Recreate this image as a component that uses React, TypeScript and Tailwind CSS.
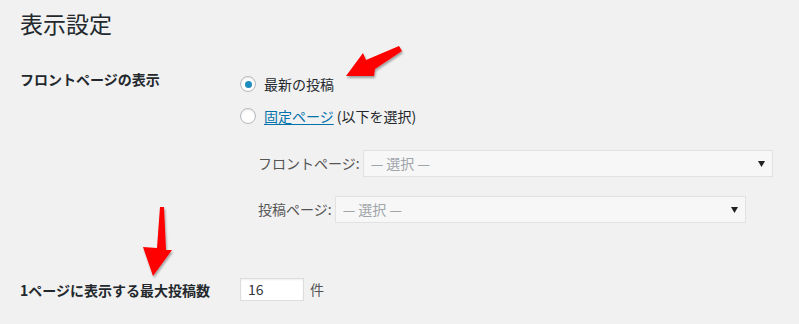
const font = { fontFamily: '"Noto Sans CJK JP", "Noto Sans", sans-serif' };

function Radio({ checked }: { checked?: boolean }) {
  return (
    <span className="flex h-[16px] w-[16px] shrink-0 items-center justify-center rounded-full border border-[#b4b9be] bg-white shadow-[inset_0_1px_2px_rgba(0,0,0,0.1)]">
      {checked && <span className="h-[7px] w-[7px] rounded-full bg-[#1e8cbe]" />}
    </span>
  );
}

function Select({ width }: { width: string }) {
  return (
    <div
      className={`flex h-[27px] ${width} items-center justify-between border border-[#e2e2e2] bg-[#f7f7f7] pl-[7px] pr-[7px] text-[14px] text-[#a0a5aa]`}
    >
      <span>— 選択 —</span>
      <svg width="7" height="6" viewBox="0 0 7 6">
        <path d="M0 0h7L3.5 6z" fill="#222" />
      </svg>
    </div>
  );
}

export default function App() {
  return (
    <div className="relative h-[324px] w-[799px] overflow-hidden bg-[#f1f1f1] text-[#23282d]" style={font}>
      <div className="pl-[20px] pt-[9px]">
        <h1 className="text-[23px] font-normal leading-[29px]">表示設定</h1>

        <div className="mt-[36px] flex">
          <div className="-mt-[5px] w-[220px] text-[14px] font-bold leading-[20px]">フロントページの表示</div>
          <div className="text-[14px]">
            <label className="flex h-[20px] items-center gap-[8px]">
              <Radio checked />
              <span className="leading-[20px]">最新の投稿</span>
            </label>
            <label className="mt-[12px] flex h-[20px] items-center gap-[8px]">
              <Radio />
              <span className="leading-[20px]">
                <a className="text-[#0073aa] underline underline-offset-2">固定ページ</a> (以下を選択)
              </span>
            </label>
            <div className="mt-[24px] flex flex-col gap-[19px] pl-[18px] text-[#555]">
              <div className="flex items-center gap-[3px]">
                <span>フロントページ:</span>
                <Select width="w-[410px]" />
              </div>
              <div className="flex items-center gap-[3px]">
                <span>投稿ページ:</span>
                <Select width="w-[411px]" />
              </div>
            </div>
          </div>
        </div>

        <div className="mt-[55px] flex items-center">
          <div className="w-[220px] text-[14px] font-bold leading-[20px]">1ページに表示する最大投稿数</div>
          <div className="flex h-[23px] w-[64px] items-center border border-[#dddddd] bg-white pl-[7px] text-[14px] text-[#32373c] shadow-[inset_0_1px_2px_rgba(0,0,0,0.07)]">
            16
          </div>
          <span className="ml-[6px] text-[14px] text-[#555]">件</span>
        </div>
      </div>

      <svg className="pointer-events-none absolute left-0 top-0" width="799" height="324">
        <defs>
          <filter id="sh" x="-20%" y="-20%" width="140%" height="140%">
            <feDropShadow dx="1" dy="2" stdDeviation="1.2" floodColor="#000" floodOpacity="0.35" />
          </filter>
        </defs>
        <polygon
          points="346,76 363,53 366,60 399,46 402,51 375,69 374,76"
          fill="#ff0000"
          filter="url(#sh)"
        />
        <polygon
          points="160,207 164,207 166,250 172,250 153,276 143,247 157,248"
          fill="#ff0000"
          filter="url(#sh)"
        />
      </svg>
    </div>
  );
}
